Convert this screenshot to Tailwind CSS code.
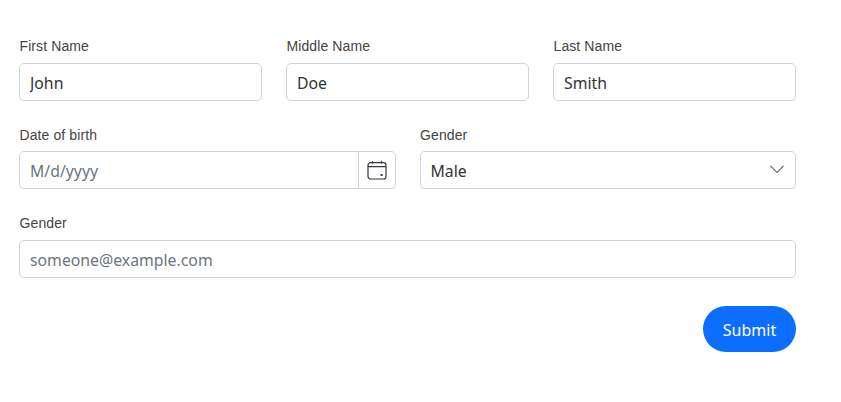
<!DOCTYPE html>
<html lang="en">
<head>
  <meta charset="UTF-8">
  <title>Form</title>
  <script src="https://cdn.jsdelivr.net/npm/@tailwindcss/browser@4"></script>
</head>
<body class="bg-white font-['Liberation_Sans',sans-serif]">
  <form class="w-[777px] ml-[19px] pt-[37px]">
    <div class="grid grid-cols-3 gap-6">
      <div>
        <label class="block h-[26px] pl-[0.5px] text-[14px] tracking-[0.1px] leading-[18px] text-[#444]">First Name</label>
        <input value="John" class="block w-full h-[38px] px-[10px] pt-[2px] border border-[#ced4da] rounded-[5px] font-['Noto_Sans',sans-serif] text-[15.8px] text-[#333]">
      </div>
      <div>
        <label class="block h-[26px] pl-[0.5px] text-[14px] tracking-[0.1px] leading-[18px] text-[#444]">Middle Name</label>
        <input value="Doe" class="block w-full h-[38px] px-[10px] pt-[2px] border border-[#ced4da] rounded-[5px] font-['Noto_Sans',sans-serif] text-[15.8px] text-[#333]">
      </div>
      <div>
        <label class="block h-[26px] pl-[0.5px] text-[14px] tracking-[0.1px] leading-[18px] text-[#444]">Last Name</label>
        <input value="Smith" class="block w-full h-[38px] px-[10px] pt-[2px] border border-[#ced4da] rounded-[5px] font-['Noto_Sans',sans-serif] text-[15.8px] text-[#333]">
      </div>
    </div>
    <div class="grid grid-cols-2 gap-6 mt-[24px]">
      <div>
        <label class="block h-[26px] pl-[0.5px] pt-px text-[14px] tracking-[0.1px] leading-[18px] text-[#444]">Date of birth</label>
        <div class="flex h-[38px] border border-[#ced4da] rounded-[5px]">
          <input placeholder="M/d/yyyy" class="flex-1 min-w-0 px-[10px] pt-[3px] font-['Noto_Sans',sans-serif] text-[15.8px] placeholder:text-[#6c757d] rounded-l-[5px]">
          <div class="w-[37px] flex items-center justify-center border-l border-[#ced4da]">
            <svg width="20" height="20" viewBox="0 0 20 20" fill="none" stroke="#343a40" stroke-width="1.2">
              <rect x="1" y="2.6" width="18" height="16.4" rx="2.6"/>
              <path d="M1 6.6h18M5.5 1v2.6M14.5 1v2.6"/>
              <rect x="13.6" y="14" width="2" height="2" fill="#343a40" stroke="none"/>
            </svg>
          </div>
        </div>
      </div>
      <div>
        <label class="block h-[26px] pl-[0.5px] pt-px text-[14px] tracking-[0.1px] leading-[18px] text-[#444]">Gender</label>
        <div class="relative">
          <select class="block w-full h-[38px] px-[10px] pt-[3px] appearance-none bg-white border border-[#ced4da] rounded-[5px] font-['Noto_Sans',sans-serif] text-[15.8px] text-[#333]">
            <option>Male</option>
            <option>Female</option>
          </select>
          <svg class="absolute right-[12px] top-[14px]" width="14" height="10" viewBox="0 0 14 10" fill="none" stroke="#6c757d" stroke-width="1.2"><path d="M0.5 1L7 7.5 13.5 1"/></svg>
        </div>
      </div>
    </div>
    <div class="mt-[25px]">
      <label class="block h-[26px] pl-[0.5px] text-[14px] tracking-[0.1px] leading-[18px] text-[#444]">Gender</label>
      <input type="email" placeholder="someone@example.com" class="block w-full h-[38px] px-[10px] pt-[2px] border border-[#ced4da] rounded-[5px] font-['Noto_Sans',sans-serif] text-[15.8px] placeholder:text-[#6c757d]">
    </div>
    <div class="flex justify-end mt-[28px]">
      <button type="button" class="w-[93px] h-[46px] pt-[2px] rounded-full bg-[#0d6efd] text-white font-['Noto_Sans',sans-serif] text-[16px]">Submit</button>
    </div>
  </form>
</body>
</html>
